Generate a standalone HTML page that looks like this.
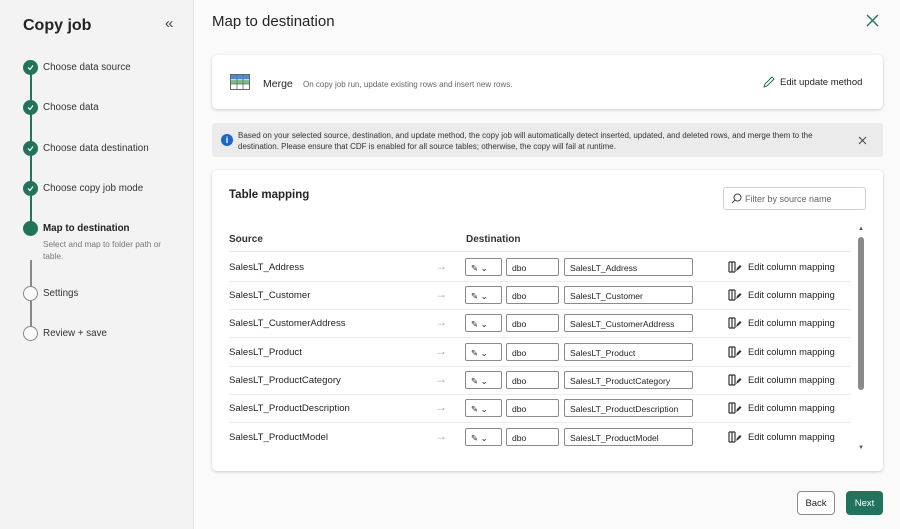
<!DOCTYPE html>
<html><head><style>
*{box-sizing:border-box;margin:0;padding:0}
body{width:900px;height:529px;overflow:hidden;font-family:"Liberation Sans",sans-serif;background:#fafafa;position:relative;color:#242424}
.side{position:absolute;left:0;top:0;width:194px;height:529px;background:#f3f3f3;border-right:1px solid #e0e0e0}
.abs{position:absolute}
.step{position:absolute;left:43px;font-size:9.8px;color:#333}
.c{position:absolute;left:23px;width:15px;height:15px;border-radius:50%;background:#22735c}
.c.o{background:#fafafa;border:1px solid #888}
.c svg{position:absolute;left:3px;top:3px}
.card{position:absolute;left:212px;width:671px;background:#fff;border-radius:5px;box-shadow:0 1px 3px rgba(0,0,0,.18)}
.row{position:absolute;left:229px;width:622px;height:28px;border-bottom:1px solid #ececec;font-size:9.6px}
.row .s{position:absolute;left:0;top:8px}
.row .ar{position:absolute;left:206px;top:5px;color:#aaa;font-size:12px}
.box{position:absolute;top:4px;height:18px;border:1px solid #8a8a8a;border-radius:2px;font-size:8.6px;padding:4px 5px;background:#fff;white-space:nowrap;overflow:hidden}
.ecm{position:absolute;left:499px;top:8px;font-size:9.3px}
.ecm svg{position:absolute;left:0;top:-1px}
.ecm span{margin-left:20px}
.btn{position:absolute;top:491px;height:24px;border-radius:4px;font-size:9.5px;display:flex;align-items:center;justify-content:center}
</style></head><body>
<div class="side">
<div class="abs" style="left:23px;top:17px;font-size:16px;font-weight:bold;color:#222">Copy job</div>
<div class="abs" style="left:165px;top:15px;font-size:15px;color:#444">«</div>
<div class="abs" style="left:30px;top:74px;width:2px;height:155px;background:#22735c"></div>
<div class="abs" style="left:30px;top:260px;width:2px;height:72px;background:#888"></div>
<div class="c" style="top:60px"><svg width="9" height="9" viewBox="0 0 9 9"><path d="M2 4.5l2 2 3-4" stroke="#fff" stroke-width="1.2" fill="none"/></svg></div>
<div class="step" style="top:62px">Choose data source</div>
<div class="c" style="top:100px"><svg width="9" height="9" viewBox="0 0 9 9"><path d="M2 4.5l2 2 3-4" stroke="#fff" stroke-width="1.2" fill="none"/></svg></div>
<div class="step" style="top:102px">Choose data</div>
<div class="c" style="top:141px"><svg width="9" height="9" viewBox="0 0 9 9"><path d="M2 4.5l2 2 3-4" stroke="#fff" stroke-width="1.2" fill="none"/></svg></div>
<div class="step" style="top:143px">Choose data destination</div>
<div class="c" style="top:181px"><svg width="9" height="9" viewBox="0 0 9 9"><path d="M2 4.5l2 2 3-4" stroke="#fff" stroke-width="1.2" fill="none"/></svg></div>
<div class="step" style="top:183px">Choose copy job mode</div>
<div class="c" style="top:221px"></div>
<div class="step" style="top:223px;font-weight:bold;color:#222">Map to destination</div>
<div class="step" style="top:238px;font-size:8.3px;color:#777;width:130px;line-height:12px">Select and map to folder path or table.</div>
<div class="c o" style="top:286px"></div>
<div class="step" style="top:288px">Settings</div>
<div class="c o" style="top:326px"></div>
<div class="step" style="top:328px">Review + save</div>
</div>

<div class="abs" style="left:212px;top:13px;font-size:15px;color:#222">Map to destination</div>
<svg class="abs" style="left:866px;top:14px" width="13" height="13" viewBox="0 0 13 13"><path d="M1 1l11 11M12 1L1 12" stroke="#22735c" stroke-width="1.4"/></svg>

<div class="card" style="top:55px;height:54px">
<svg class="abs" style="left:18px;top:19px" width="20" height="16" viewBox="0 0 20 16"><rect x=".5" y=".5" width="19" height="15" fill="#fff" stroke="#666"/><rect x="1" y="1" width="18" height="4" fill="#4a8fd6"/><rect x="1" y="5.5" width="18" height="4.5" fill="#7cc08e"/><path d="M7 1v15M13 1v15M1 10h18" stroke="#666" stroke-width=".8"/></svg>
<div class="abs" style="left:51px;top:23px;font-size:10.5px">Merge</div>
<div class="abs" style="left:91px;top:25px;font-size:8px;color:#666">On copy job run, update existing rows and insert new rows.</div>
<svg class="abs" style="left:551px;top:21px" width="12" height="12" viewBox="0 0 12 12"><path d="M1 11l1-3 7-7 2 2-7 7z" stroke="#22735c" fill="none"/></svg>
<div class="abs" style="left:568px;top:22px;font-size:9.5px">Edit update method</div>
</div>

<div class="abs" style="left:212px;top:123px;width:671px;height:34px;background:#ebebeb;border-radius:3px">
<div class="abs" style="left:9px;top:11px;width:12px;height:12px;border-radius:50%;background:#1a66c9;color:#fff;font-size:9px;font-weight:bold;text-align:center;line-height:12px">i</div>
<div class="abs" style="left:26px;top:7px;font-size:8px;line-height:11px;color:#333;width:610px">Based on your selected source, destination, and update method, the copy job will automatically detect inserted, updated, and deleted rows, and merge them to the destination. Please ensure that CDF is enabled for all source tables; otherwise, the copy will fail at runtime.</div>
<svg class="abs" style="left:646px;top:13px" width="9" height="9" viewBox="0 0 9 9"><path d="M1 1l7 7M8 1L1 8" stroke="#444" stroke-width="1"/></svg>
</div>

<div class="card" style="top:170px;height:301px">
<div class="abs" style="left:17px;top:19px;font-size:11.5px;font-weight:bold">Table mapping</div>
<div class="abs" style="left:511px;top:17px;width:143px;height:23px;border:1px solid #d0d0d0;border-radius:3px">
<svg class="abs" style="left:7px;top:5px" width="11" height="11" viewBox="0 0 11 11"><circle cx="6.5" cy="4.5" r="3.5" stroke="#444" fill="none"/><path d="M4 7L1 10" stroke="#444"/></svg>
<div class="abs" style="left:21px;top:6px;font-size:9px;color:#666">Filter by source name</div>
</div>
<div class="abs" style="left:17px;top:64px;font-size:10px;font-weight:bold;color:#333">Source</div>
<div class="abs" style="left:254px;top:64px;font-size:10px;font-weight:bold;color:#333">Destination</div>
<div class="abs" style="left:17px;top:81px;width:622px;border-bottom:1px solid #e6e6e6"></div>
<div class="abs" style="left:646px;top:56px;font-size:6px;color:#555">▲</div>
<div class="abs" style="left:646px;top:67px;width:6px;height:153px;background:#8a8a8a;border-radius:3px"></div>
<div class="abs" style="left:646px;top:275px;font-size:6px;color:#555">▼</div>
</div>

<div class="row" style="top:254px"><span class="s">SalesLT_Address</span><span class="ar">→</span><span class="box" style="left:236px;width:37px">✎ ⌄</span><span class="box" style="left:277px;width:53px">dbo</span><span class="box" style="left:335px;width:129px">SalesLT_Address</span><span class="ecm"><svg width="14" height="12" viewBox="0 0 14 12"><path d="M1 1v10M4 1v10M7 1v10M1 1h6M1 11h6" stroke="#333" stroke-width="1.2" fill="none"/><path d="M8 10l1-3 3-3 1.5 1.5-3 3z" fill="#333"/></svg><span>Edit column mapping</span></span></div>
<div class="row" style="top:282px"><span class="s">SalesLT_Customer</span><span class="ar">→</span><span class="box" style="left:236px;width:37px">✎ ⌄</span><span class="box" style="left:277px;width:53px">dbo</span><span class="box" style="left:335px;width:129px">SalesLT_Customer</span><span class="ecm"><svg width="14" height="12" viewBox="0 0 14 12"><path d="M1 1v10M4 1v10M7 1v10M1 1h6M1 11h6" stroke="#333" stroke-width="1.2" fill="none"/><path d="M8 10l1-3 3-3 1.5 1.5-3 3z" fill="#333"/></svg><span>Edit column mapping</span></span></div>
<div class="row" style="top:310px"><span class="s">SalesLT_CustomerAddress</span><span class="ar">→</span><span class="box" style="left:236px;width:37px">✎ ⌄</span><span class="box" style="left:277px;width:53px">dbo</span><span class="box" style="left:335px;width:129px">SalesLT_CustomerAddress</span><span class="ecm"><svg width="14" height="12" viewBox="0 0 14 12"><path d="M1 1v10M4 1v10M7 1v10M1 1h6M1 11h6" stroke="#333" stroke-width="1.2" fill="none"/><path d="M8 10l1-3 3-3 1.5 1.5-3 3z" fill="#333"/></svg><span>Edit column mapping</span></span></div>
<div class="row" style="top:339px"><span class="s">SalesLT_Product</span><span class="ar">→</span><span class="box" style="left:236px;width:37px">✎ ⌄</span><span class="box" style="left:277px;width:53px">dbo</span><span class="box" style="left:335px;width:129px">SalesLT_Product</span><span class="ecm"><svg width="14" height="12" viewBox="0 0 14 12"><path d="M1 1v10M4 1v10M7 1v10M1 1h6M1 11h6" stroke="#333" stroke-width="1.2" fill="none"/><path d="M8 10l1-3 3-3 1.5 1.5-3 3z" fill="#333"/></svg><span>Edit column mapping</span></span></div>
<div class="row" style="top:367px"><span class="s">SalesLT_ProductCategory</span><span class="ar">→</span><span class="box" style="left:236px;width:37px">✎ ⌄</span><span class="box" style="left:277px;width:53px">dbo</span><span class="box" style="left:335px;width:129px">SalesLT_ProductCategory</span><span class="ecm"><svg width="14" height="12" viewBox="0 0 14 12"><path d="M1 1v10M4 1v10M7 1v10M1 1h6M1 11h6" stroke="#333" stroke-width="1.2" fill="none"/><path d="M8 10l1-3 3-3 1.5 1.5-3 3z" fill="#333"/></svg><span>Edit column mapping</span></span></div>
<div class="row" style="top:395px"><span class="s">SalesLT_ProductDescription</span><span class="ar">→</span><span class="box" style="left:236px;width:37px">✎ ⌄</span><span class="box" style="left:277px;width:53px">dbo</span><span class="box" style="left:335px;width:129px">SalesLT_ProductDescription</span><span class="ecm"><svg width="14" height="12" viewBox="0 0 14 12"><path d="M1 1v10M4 1v10M7 1v10M1 1h6M1 11h6" stroke="#333" stroke-width="1.2" fill="none"/><path d="M8 10l1-3 3-3 1.5 1.5-3 3z" fill="#333"/></svg><span>Edit column mapping</span></span></div>
<div class="row" style="top:424px;border-bottom:none"><span class="s">SalesLT_ProductModel</span><span class="ar">→</span><span class="box" style="left:236px;width:37px">✎ ⌄</span><span class="box" style="left:277px;width:53px">dbo</span><span class="box" style="left:335px;width:129px">SalesLT_ProductModel</span><span class="ecm"><svg width="14" height="12" viewBox="0 0 14 12"><path d="M1 1v10M4 1v10M7 1v10M1 1h6M1 11h6" stroke="#333" stroke-width="1.2" fill="none"/><path d="M8 10l1-3 3-3 1.5 1.5-3 3z" fill="#333"/></svg><span>Edit column mapping</span></span></div>

<div class="btn" style="left:797px;width:38px;border:1px solid #8a8a8a;background:#fff">Back</div>
<div class="btn" style="left:846px;width:37px;background:#22735c;color:#fff">Next</div>
</body></html>
